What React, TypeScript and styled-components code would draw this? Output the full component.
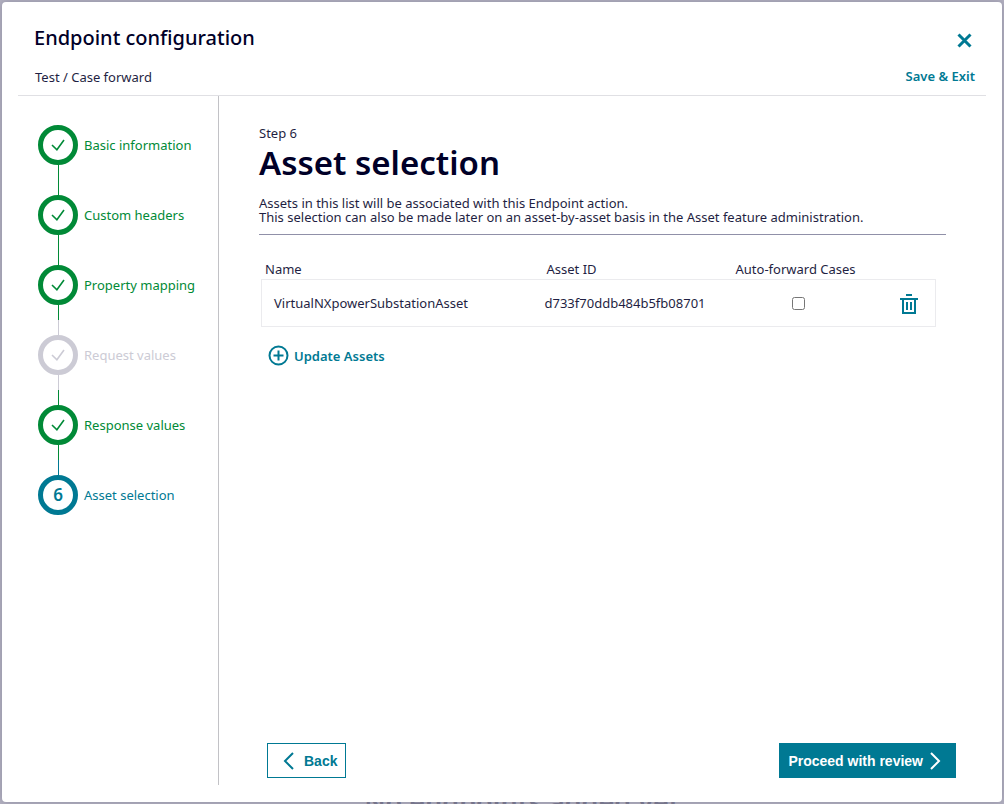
import React from "react";
import styled, { createGlobalStyle } from "styled-components";

const teal = "#007993";
const green = "#018a37";
const grey = "#cccbd5";
const navy = "#000028";
const ink = "#1f1f43";

type State = "done" | "skipped" | "current";
const tone: Record<State, string> = { done: green, skipped: grey, current: teal };

const GlobalStyle = createGlobalStyle`
  * { box-sizing: border-box; }
  html, body, #root { height: 100%; }
  body {
    margin: 0;
    background: #b3b1c1;
    color: ${ink};
    font: 13px/14px "Noto Sans", "Open Sans", sans-serif;
  }
  h1, h2, p, ol { margin: 0; padding: 0; }
  button { font: inherit; color: inherit; cursor: pointer; }
`;

const Backdrop = styled.div`
  position: relative;
  min-height: 100%;
  padding: 2px;
  display: flex;
  overflow: hidden;
`;

const PageBehind = styled.p`
  position: absolute;
  left: 40px;
  right: 0;
  top: calc(100% - 18px);
  text-align: center;
  font-size: 27px;
  line-height: 32px;
  font-weight: 600;
  color: #807f95;
`;

const Dialog = styled.section`
  position: relative;
  flex: 1;
  display: flex;
  flex-direction: column;
  padding: 0 16px 17px;
  background: #fff;
  border-radius: 4px;
  box-shadow: 0 0 8px rgba(0, 0, 40, 0.2);
`;

const Header = styled.header`
  display: grid;
  grid-template-columns: 1fr auto;
  grid-template-rows: 32px 24px;
  row-gap: 10px;
  align-items: center;
  padding: 20px 11px 7px 16px;
  border-bottom: 1px solid #e0e0e4;
`;

const Title = styled.h1`
  color: ${navy};
  font-size: 20px;
  line-height: 28px;
  font-weight: 500;
`;

const PlainButton = styled.button`
  display: inline-flex;
  align-items: center;
  justify-self: end;
  gap: 5px;
  padding: 0;
  border: 0;
  background: none;
  color: ${teal};
  font-weight: 600;
`;

const CloseButton = styled(PlainButton)`
  padding: 4px 3px 0;
`;

const Path = styled.p`
  line-height: 16px;
  padding: 2px 0 0 1px;
`;

const Body = styled.div`
  flex: 1;
  display: flex;
`;

const Sidebar = styled.nav`
  width: 201px;
  flex: none;
  padding: 29px 0 0 20px;
  border-right: 1px solid #c2c2c6;
`;

const Steps = styled.ol`
  list-style: none;
`;

const Step = styled.li<{ $state: State }>`
  display: grid;
  grid-template-columns: 40px 1fr;
  grid-template-rows: 40px auto;
  column-gap: 6px;
  align-items: center;
  color: ${(p) => tone[p.$state]};
`;

const StepCircle = styled.span`
  display: flex;
  align-items: center;
  justify-content: center;
  height: 40px;
  border: 5px solid currentColor;
  border-radius: 50%;
  font-size: 17px;
  font-weight: 600;
`;

const StepLabel = styled.span`
  white-space: nowrap;
`;

const Connector = styled.span<{ $from: State; $to: State }>`
  justify-self: center;
  width: 1px;
  height: 30px;
  background: linear-gradient(${(p) => tone[p.$from]} 50%, ${(p) => tone[p.$to]} 50%);
`;

const Content = styled.main`
  flex: 1;
  min-width: 0;
  display: flex;
  flex-direction: column;
  padding: 30px 30px 7px 40px;
`;

const Heading = styled.h2`
  color: ${navy};
  font-size: 33px;
  line-height: 46px;
  font-weight: 600;
`;

const Intro = styled.p`
  && {
    margin-right: 10px;
    padding: 10px 0;
  }
  border-bottom: 1px solid #9090a8;
`;

const Assets = styled.table`
  margin: 26px 20px 0 2px;
  border-collapse: separate;
  border-spacing: 0;
  table-layout: fixed;
`;

const HeadCell = styled.th<{ $width?: string; $indent: number }>`
  width: ${(p) => p.$width ?? "auto"};
  padding: 1px 0 3px ${(p) => p.$indent}px;
  text-align: left;
  font-weight: 400;
`;

const Cell = styled.td<{ $indent?: number; $align?: string }>`
  height: 48px;
  padding: 0 0 0 ${(p) => p.$indent ?? 0}px;
  text-align: ${(p) => p.$align ?? "left"};
  border: 1px solid #ebebee;
  border-width: 1px 0;
  &:first-child { border-left-width: 1px; }
  &:last-child { border-right-width: 1px; padding-right: 17px; }
`;

const Checkbox = styled.input`
  display: block;
  width: 13px;
  height: 13px;
  margin: 0 0 0 58px;
`;

const IconButton = styled(PlainButton)`
  vertical-align: middle;
  padding-top: 2px;
`;

const AddButton = styled(PlainButton)`
  align-self: flex-start;
  margin: 18px 0 0 9px;
`;

const Footer = styled.footer`
  display: flex;
  justify-content: space-between;
  margin-top: auto;
  padding-left: 8px;
`;

const ActionButton = styled.button<{ $primary?: boolean }>`
  display: flex;
  align-items: center;
  gap: ${(p) => (p.$primary ? 7 : 10)}px;
  height: 35px;
  padding: ${(p) => (p.$primary ? "0 13px 0 8px" : "0 8px 0 14px")};
  border: 1px solid ${teal};
  background: ${(p) => (p.$primary ? teal : "#fff")};
  color: ${(p) => (p.$primary ? "#fff" : teal)};
  font: bold 14px/16px "Liberation Sans", Arial, sans-serif;
`;

const steps: { label: string; state: State }[] = [
  { label: "Basic information", state: "done" },
  { label: "Custom headers", state: "done" },
  { label: "Property mapping", state: "done" },
  { label: "Request values", state: "skipped" },
  { label: "Response values", state: "done" },
  { label: "Asset selection", state: "current" },
];

const Check = () => (
  <svg width="14" height="14" viewBox="0 0 14 14" fill="none" stroke="currentColor" strokeWidth="1.6" aria-hidden>
    <path d="M1 7 5.9 11.8 13 2" />
  </svg>
);

const Trash = () => (
  <svg width="18" height="20" viewBox="0 0 18 20" fill="none" stroke="currentColor" aria-hidden>
    <path d="M6 1h6M0 5h18" strokeWidth="2" />
    <path d="M3 5v14h12V5" strokeWidth="2" />
    <path d="M7 8v8M11 8v8" strokeWidth="2" />
  </svg>
);

const Chevron = ({ d }: { d: string }) => (
  <svg width="12" height="18" viewBox="0 0 12 18" fill="none" stroke="currentColor" strokeWidth="2" aria-hidden>
    <path d={d} />
  </svg>
);

export default function App() {
  return (
    <>
      <GlobalStyle />
      <Backdrop>
        <PageBehind aria-hidden>No endpoints added yet</PageBehind>
        <Dialog role="dialog" aria-labelledby="dialog-title">
          <Header>
            <Title id="dialog-title">Endpoint configuration</Title>
            <CloseButton type="button" aria-label="Close">
              <svg width="15" height="15" viewBox="0 0 15 15" stroke="currentColor" strokeWidth="3" aria-hidden>
                <path d="M1.5 1.5l12 12M13.5 1.5l-12 12" />
              </svg>
            </CloseButton>
            <Path>Test / Case forward</Path>
            <PlainButton type="button">Save &amp; Exit</PlainButton>
          </Header>
          <Body>
            <Sidebar aria-label="Steps">
              <Steps>
                {steps.map((s, i) => (
                  <Step key={s.label} $state={s.state}>
                    <StepCircle>{s.state === "current" ? i + 1 : <Check />}</StepCircle>
                    <StepLabel>{s.label}</StepLabel>
                    {steps[i + 1] && <Connector $from={s.state} $to={steps[i + 1].state} />}
                  </Step>
                ))}
              </Steps>
            </Sidebar>
            <Content>
              <p>Step 6</p>
              <Heading>Asset selection</Heading>
              <Intro>
                Assets in this list will be associated with this Endpoint action.
                <br />
                This selection can also be made later on an asset-by-asset basis in the Asset feature administration.
              </Intro>
              <Assets>
                <thead>
                  <tr>
                    <HeadCell $width="42%" $indent={4}>Name</HeadCell>
                    <HeadCell $width="28%" $indent={2}>Asset ID</HeadCell>
                    <HeadCell $indent={2}>Auto-forward Cases</HeadCell>
                    <HeadCell $width="60px" $indent={0} aria-label="Actions" />
                  </tr>
                </thead>
                <tbody>
                  <tr>
                    <Cell $indent={12}>VirtualNXpowerSubstationAsset</Cell>
                    <Cell>d733f70ddb484b5fb08701</Cell>
                    <Cell>
                      <Checkbox type="checkbox" aria-label="Auto-forward cases for VirtualNXpowerSubstationAsset" />
                    </Cell>
                    <Cell $align="right">
                      <IconButton type="button" aria-label="Delete asset">
                        <Trash />
                      </IconButton>
                    </Cell>
                  </tr>
                </tbody>
              </Assets>
              <AddButton type="button">
                <svg width="21" height="21" viewBox="0 0 21 21" fill="none" stroke="currentColor" strokeWidth="2" aria-hidden>
                  <circle cx="10.5" cy="10.5" r="9" />
                  <path d="M10.5 5.5v10M5.5 10.5h10" />
                </svg>
                Update Assets
              </AddButton>
              <Footer>
                <ActionButton type="button">
                  <Chevron d="M11 1 3 9l8 8" />
                  Back
                </ActionButton>
                <ActionButton type="button" $primary>
                  Proceed with review
                  <Chevron d="M1 1l8 8-8 8" />
                </ActionButton>
              </Footer>
            </Content>
          </Body>
        </Dialog>
      </Backdrop>
    </>
  );
}
